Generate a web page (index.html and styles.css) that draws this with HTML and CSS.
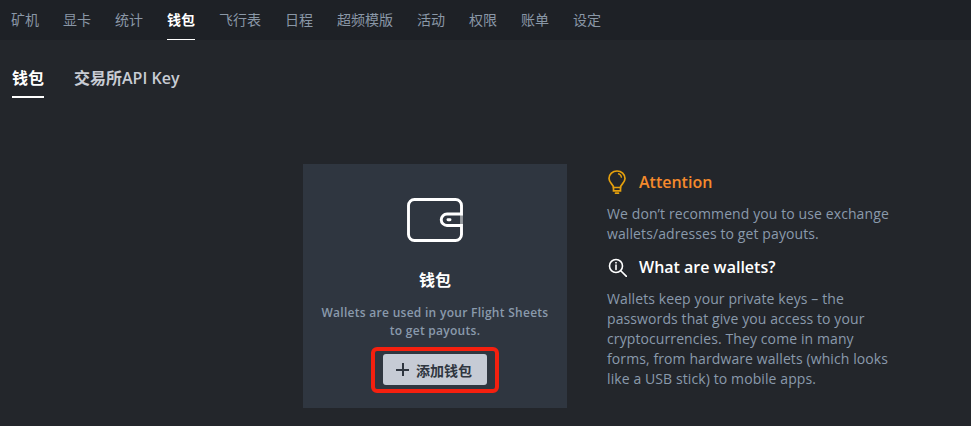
FILE: index.html
```html
<!DOCTYPE html>
<html lang="en">
<head>
    <meta charset="UTF-8">
    <meta name="viewport" content="width=device-width, initial-scale=1.0">
    <title>钱包</title>
    <link rel="stylesheet" href="styles.css">
</head>
<body>
    <nav class="top-nav">
        <a class="top-link">矿机</a>
        <a class="top-link">显卡</a>
        <a class="top-link">统计</a>
        <a class="top-link active">钱包</a>
        <a class="top-link">飞行表</a>
        <a class="top-link">日程</a>
        <a class="top-link">超频模版</a>
        <a class="top-link">活动</a>
        <a class="top-link">权限</a>
        <a class="top-link">账单</a>
        <a class="top-link">设定</a>
    </nav>

    <div class="tabs">
        <a class="tab active">钱包</a>
        <a class="tab">交易所API Key</a>
    </div>

    <main class="content">
        <section class="card">
            <svg class="wallet-icon" width="56" height="44" viewBox="0 0 56 44" fill="none" stroke="#fff" stroke-width="2.900">
                <path d="M54.500 16V7.500a6 6 0 0 0-6-6H7.500a6 6 0 0 0-6 6v29a6 6 0 0 0 6 6h41a6 6 0 0 0 6-6v-9H40a5.700 5.700 0 0 1 0-11.500z"/>
                <path d="M54.500 16v11.500" stroke-opacity="0.5"/>
                <path d="M41 21.800h2" stroke-linecap="round"/>
            </svg>
            <h3 class="card-title">钱包</h3>
            <p class="card-text">Wallets are used in your Flight Sheets to get payouts.</p>
            <div class="add-wrap">
                <button class="add-button"><span class="plus"></span>添加钱包</button>
                <div class="red-mark"></div>
            </div>
        </section>

        <aside class="info">
            <h4 class="info-head attention">
                <svg class="info-icon" width="20" height="24" viewBox="0 0 20 24" fill="none" stroke="#e5a00d" stroke-width="1.700">
                    <path d="M6.500 17.500c0-3.200-4.500-4.500-4.500-9a8 7.500 0 0 1 16 0c0 4.500-4.500 5.800-4.500 9z"/>
                    <path d="M6.500 17.500v3.300h7v-3.300M8.500 23.200h3" stroke-linecap="round"/>
                    <path d="M11 3.700a4.500 4.500 0 0 1 3.500 4" stroke-width="1.200"/>
                </svg>
                Attention
            </h4>
            <p class="info-text">We don’t recommend you to use exchange wallets/adresses to get payouts.</p>
            <h4 class="info-head second">
                <svg class="info-icon" width="20" height="20" viewBox="0 0 20 20" fill="none" stroke="#fff" stroke-width="1.600">
                    <circle cx="9" cy="9" r="6.500"/>
                    <path d="M14 14l5.500 5.500M9 8v4.500" stroke-linecap="round"/>
                    <path d="M9 5v1.400"/>
                </svg>
                What are wallets?
            </h4>
            <p class="info-text">Wallets keep your private keys – the passwords that give you access to your cryptocurrencies. They come in many forms, from hardware wallets (which looks like a USB stick) to mobile apps.</p>
        </aside>
    </main>
</body>
</html>
```

FILE: styles.css
```css
body {
    margin: 0;
    height: 426px;
    overflow: hidden;
    background-color: #23262b;
    color: #8f9eb0;
    font-family: 'Open Sans', 'Noto Sans CJK SC', sans-serif;
}

.top-nav {
    display: flex;
    gap: 24px;
    height: 40px;
    padding-left: 11px;
    background-color: #1e2126;
}

.top-link {
    height: 40px;
    box-sizing: border-box;
    font-size: 14px;
    line-height: 39px;
    color: #8a97a6;
}

.top-link.active {
    color: #fff;
    font-weight: 700;
    border-bottom: 1px solid #fff;
}

.tabs {
    display: flex;
    gap: 30px;
    height: 58px;
    padding-left: 12px;
}

.tab {
    height: 58px;
    box-sizing: border-box;
    font-size: 16px;
    font-weight: 600;
    line-height: 77px;
    color: #c8ccd4;
}

.tab.active {
    color: #fff;
    font-weight: 700;
    border-bottom: 2px solid #fff;
}

.content {
    display: flex;
    gap: 40px;
    padding: 66px 0 0 303px;
}

.card {
    width: 264px;
    height: 244px;
    box-sizing: border-box;
    padding-top: 34px;
    background-color: #2f3640;
    text-align: center;
}

.wallet-icon {
    display: block;
    margin: 0 auto;
}

.card-title {
    margin: 26px 0 0;
    font-size: 16px;
    font-weight: 700;
    line-height: 24px;
    color: #fff;
}

.card-text {
    margin: 12px 15px 0;
    font-size: 12px;
    font-weight: 600;
    line-height: 18px;
    letter-spacing: 0.28px;
    color: #8a9aac;
}

.add-wrap {
    position: relative;
    width: 104px;
    margin: 14px auto 0;
}

.add-button {
    display: flex;
    align-items: center;
    justify-content: center;
    width: 104px;
    height: 31px;
    padding: 0 2px 0 0;
    border: none;
    border-radius: 3px;
    background-color: #c6cbd5;
    color: #2f3640;
    font-family: inherit;
    font-size: 14px;
    font-weight: 600;
}

.plus {
    width: 13px;
    height: 13px;
    margin-right: 7px;
    background:
        linear-gradient(#2f3640, #2f3640) center / 13px 2px no-repeat,
        linear-gradient(#2f3640, #2f3640) center / 2px 13px no-repeat;
}

.red-mark {
    position: absolute;
    top: -7px;
    left: -12px;
    width: 128px;
    height: 46px;
    box-sizing: border-box;
    border: 4px solid #f5200f;
    border-radius: 6px;
}

.info {
    width: 286px;
    padding-top: 6px;
}

.info-head {
    display: flex;
    align-items: center;
    gap: 12px;
    margin: 0;
    font-size: 16px;
    font-weight: 600;
    line-height: 24px;
    color: #fff;
}

.info-head.attention {
    color: #f58a2c;
}

.info-head.second {
    margin-top: 11px;
}

.info-icon {
    flex: none;
}

.info-text {
    margin: 10px 0 0;
    font-size: 14px;
    line-height: 20px;
    letter-spacing: 0.1px;
    color: #8a9aac;
}
```
